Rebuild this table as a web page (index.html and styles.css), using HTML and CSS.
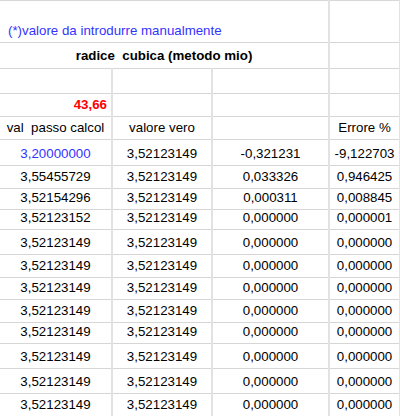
FILE: index.html
```html
<!DOCTYPE html>
<html lang="it">
<head>
<meta charset="UTF-8">
<title>radice cubica</title>
<link rel="stylesheet" href="styles.css">
</head>
<body>
<table class="sheet">
<colgroup>
<col class="c1">
<col class="c2">
<col class="c3">
<col class="c4">
</colgroup>
<tr class="h42"><td colspan="3" class="note">(*)valore da introdurre manualmente</td><td></td></tr>
<tr class="h26"><td colspan="3" class="title">radice  cubica (metodo mio)</td><td></td></tr>
<tr class="h25"><td></td><td></td><td></td><td></td></tr>
<tr class="h23"><td class="input">43,66</td><td></td><td></td><td></td></tr>
<tr class="h23"><td>val  passo calcol</td><td>valore vero</td><td></td><td>Errore %</td></tr>
<tr class="h26"><td class="blue">3,20000000</td><td>3,52123149</td><td>-0,321231</td><td>-9,122703</td></tr>
<tr class="h23"><td>3,55455729</td><td>3,52123149</td><td>0,033326</td><td>0,946425</td></tr>
<tr class="h21"><td>3,52154296</td><td>3,52123149</td><td>0,000311</td><td>0,008845</td></tr>
<tr class="h19"><td>3,52123152</td><td>3,52123149</td><td>0,000000</td><td>0,000001</td></tr>
<tr class="h25"><td>3,52123149</td><td>3,52123149</td><td>0,000000</td><td>0,000000</td></tr>
<tr class="h23"><td>3,52123149</td><td>3,52123149</td><td>0,000000</td><td>0,000000</td></tr>
<tr class="h22"><td>3,52123149</td><td>3,52123149</td><td>0,000000</td><td>0,000000</td></tr>
<tr class="h23"><td>3,52123149</td><td>3,52123149</td><td>0,000000</td><td>0,000000</td></tr>
<tr class="h21"><td>3,52123149</td><td>3,52123149</td><td>0,000000</td><td>0,000000</td></tr>
<tr class="h25"><td>3,52123149</td><td>3,52123149</td><td>0,000000</td><td>0,000000</td></tr>
<tr class="h25"><td>3,52123149</td><td>3,52123149</td><td>0,000000</td><td>0,000000</td></tr>
<tr class="h23"><td>3,52123149</td><td>3,52123149</td><td>0,000000</td><td>0,000000</td></tr>
</table>
</body>
</html>
```

FILE: styles.css
```css
body {
	margin: 0;
	background: #fff;
	font-family: "Liberation Sans", Arial, sans-serif;
	font-size: 13.3px;
	color: #000;
}

.sheet {
	border-collapse: collapse;
	table-layout: fixed;
	width: 400px;
	border-top: 1px solid #d8d8d8;
}
.c1 { width: 112px; }
.c2 { width: 100px; }
.c3 { width: 117px; }
.c4 { width: 71px; }

.sheet td {
	padding: 0 2px 3px;
	text-align: center;
	vertical-align: bottom;
	line-height: 16px;
	white-space: pre;
	overflow: visible;
	border-bottom: 1px solid #d6d6d6;
	border-right: 2px solid #e2e2e2;
}
.sheet td:first-child { border-left: none; }

.h42 { height: 42px; }
.h26 { height: 26px; }
.h25 { height: 25px; }
.h23 { height: 23px; }
.h22 { height: 22px; }
.h21 { height: 21px; }
.h19 { height: 19px; }

.sheet td.note {
	text-align: left;
	padding-left: 8px;
	padding-bottom: 3px;
	color: #3333ff;
}
.sheet td.title {
	font-weight: bold;
	padding-bottom: 4px;
}
.sheet td.input {
	text-align: right;
	padding-right: 4px;
	font-weight: bold;
	color: #ff0000;
}
.blue {
	color: #3333ff;
}
```
